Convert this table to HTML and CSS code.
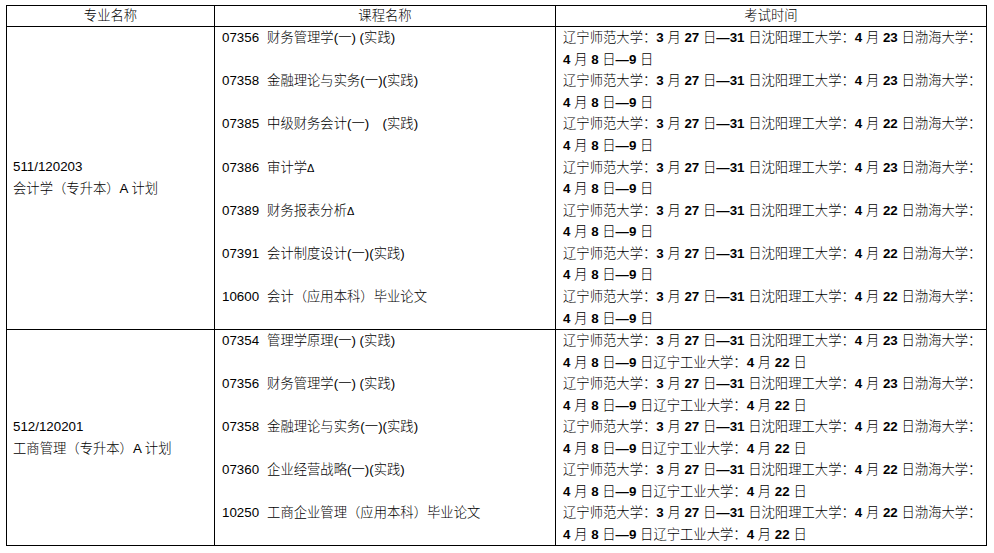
FILE: index.html
```html
<!DOCTYPE html>
<html lang="zh-CN">
<head>
<meta charset="utf-8">
<title>考试安排</title>
<link rel="stylesheet" href="styles.css">
</head>
<body>
<table class="exam">
  <colgroup>
    <col class="c-major">
    <col class="c-course">
    <col class="c-time">
  </colgroup>
  <thead>
    <tr>
      <th>专业名称</th>
      <th>课程名称</th>
      <th>考试时间</th>
    </tr>
  </thead>
  <tbody>
    <tr class="sec sec-a">
      <td class="major"><div>511/120203</div><div>会计学（专升本）A 计划</div></td>
      <td class="courses">
        <div class="item"><span class="code">07356</span>财务管理学(一) (实践)</div>
        <div class="item"><span class="code">07358</span>金融理论与实务(一)(实践)</div>
        <div class="item"><span class="code">07385</span>中级财务会计(一)　(实践)</div>
        <div class="item"><span class="code">07386</span>审计学<span class="tri">Δ</span></div>
        <div class="item"><span class="code">07389</span>财务报表分析<span class="tri">Δ</span></div>
        <div class="item"><span class="code">07391</span>会计制度设计(一)(实践)</div>
        <div class="item"><span class="code">10600</span>会计（应用本科）毕业论文</div>
      </td>
      <td class="times">
        <div class="item"><div>辽宁师范大学：<b>3 </b>月 <b>27 </b>日<b>—31 </b>日沈阳理工大学：<b>4 </b>月 <b>23 </b>日渤海大学：</div><div><b>4 </b>月 <b>8 </b>日<b>—9 </b>日</div></div>
        <div class="item"><div>辽宁师范大学：<b>3 </b>月 <b>27 </b>日<b>—31 </b>日沈阳理工大学：<b>4 </b>月 <b>23 </b>日渤海大学：</div><div><b>4 </b>月 <b>8 </b>日<b>—9 </b>日</div></div>
        <div class="item"><div>辽宁师范大学：<b>3 </b>月 <b>27 </b>日<b>—31 </b>日沈阳理工大学：<b>4 </b>月 <b>22 </b>日渤海大学：</div><div><b>4 </b>月 <b>8 </b>日<b>—9 </b>日</div></div>
        <div class="item"><div>辽宁师范大学：<b>3 </b>月 <b>27 </b>日<b>—31 </b>日沈阳理工大学：<b>4 </b>月 <b>23 </b>日渤海大学：</div><div><b>4 </b>月 <b>8 </b>日<b>—9 </b>日</div></div>
        <div class="item"><div>辽宁师范大学：<b>3 </b>月 <b>27 </b>日<b>—31 </b>日沈阳理工大学：<b>4 </b>月 <b>22 </b>日渤海大学：</div><div><b>4 </b>月 <b>8 </b>日<b>—9 </b>日</div></div>
        <div class="item"><div>辽宁师范大学：<b>3 </b>月 <b>27 </b>日<b>—31 </b>日沈阳理工大学：<b>4 </b>月 <b>22 </b>日渤海大学：</div><div><b>4 </b>月 <b>8 </b>日<b>—9 </b>日</div></div>
        <div class="item"><div>辽宁师范大学：<b>3 </b>月 <b>27 </b>日<b>—31 </b>日沈阳理工大学：<b>4 </b>月 <b>22 </b>日渤海大学：</div><div><b>4 </b>月 <b>8 </b>日<b>—9 </b>日</div></div>
      </td>
    </tr>
    <tr class="sec sec-b">
      <td class="major"><div>512/120201</div><div>工商管理（专升本）A 计划</div></td>
      <td class="courses">
        <div class="item"><span class="code">07354</span>管理学原理(一) (实践)</div>
        <div class="item"><span class="code">07356</span>财务管理学(一) (实践)</div>
        <div class="item"><span class="code">07358</span>金融理论与实务(一)(实践)</div>
        <div class="item"><span class="code">07360</span>企业经营战略(一)(实践)</div>
        <div class="item"><span class="code">10250</span>工商企业管理（应用本科）毕业论文</div>
      </td>
      <td class="times">
        <div class="item"><div>辽宁师范大学：<b>3 </b>月 <b>27 </b>日<b>—31 </b>日沈阳理工大学：<b>4 </b>月 <b>23 </b>日渤海大学：</div><div><b>4 </b>月 <b>8 </b>日<b>—9 </b>日辽宁工业大学：<b>4 </b>月 <b>22 </b>日</div></div>
        <div class="item"><div>辽宁师范大学：<b>3 </b>月 <b>27 </b>日<b>—31 </b>日沈阳理工大学：<b>4 </b>月 <b>23 </b>日渤海大学：</div><div><b>4 </b>月 <b>8 </b>日<b>—9 </b>日辽宁工业大学：<b>4 </b>月 <b>22 </b>日</div></div>
        <div class="item"><div>辽宁师范大学：<b>3 </b>月 <b>27 </b>日<b>—31 </b>日沈阳理工大学：<b>4 </b>月 <b>22 </b>日渤海大学：</div><div><b>4 </b>月 <b>8 </b>日<b>—9 </b>日辽宁工业大学：<b>4 </b>月 <b>22 </b>日</div></div>
        <div class="item"><div>辽宁师范大学：<b>3 </b>月 <b>27 </b>日<b>—31 </b>日沈阳理工大学：<b>4 </b>月 <b>22 </b>日渤海大学：</div><div><b>4 </b>月 <b>8 </b>日<b>—9 </b>日辽宁工业大学：<b>4 </b>月 <b>22 </b>日</div></div>
        <div class="item"><div>辽宁师范大学：<b>3 </b>月 <b>27 </b>日<b>—31 </b>日沈阳理工大学：<b>4 </b>月 <b>22 </b>日渤海大学：</div><div><b>4 </b>月 <b>8 </b>日<b>—9 </b>日辽宁工业大学：<b>4 </b>月 <b>22 </b>日</div></div>
      </td>
    </tr>
  </tbody>
</table>
</body>
</html>
```
FILE: styles.css
```css
html, body {
  margin: 0;
  padding: 0;
  background: #fff;
}
body {
  padding: 5px 0 0 6px;
  font-family: "Liberation Sans", "Noto Sans CJK SC", sans-serif;
  font-size: 13.33px;
  color: #000;
}
.exam {
  border-collapse: collapse;
  table-layout: fixed;
  width: 980px;
}
.c-major { width: 208px; }
.c-course { width: 341px; }
.c-time { width: 431px; }
.exam th,
.exam td {
  border: 1px solid #000;
  padding: 0 7px;
  text-align: left;
  vertical-align: top;
  font-weight: 300;
}
.exam th {
  text-align: center;
  height: 20px;
  line-height: 20px;
  padding: 0;
}
.exam .major {
  vertical-align: middle;
  line-height: 22px;
  padding-left: 6px;
}
.item {
  white-space: nowrap;
  line-height: 21.55px;
}
.sec-a .item { height: 43.2px; }
.sec-b .item { height: 43px; }
.sec-b .times .item div { line-height: 21.5px; }
.times b {
  font-weight: bold;
}
.code {
  margin-right: 8px;
}
.tri {
  font-size: 11px;
}
```
